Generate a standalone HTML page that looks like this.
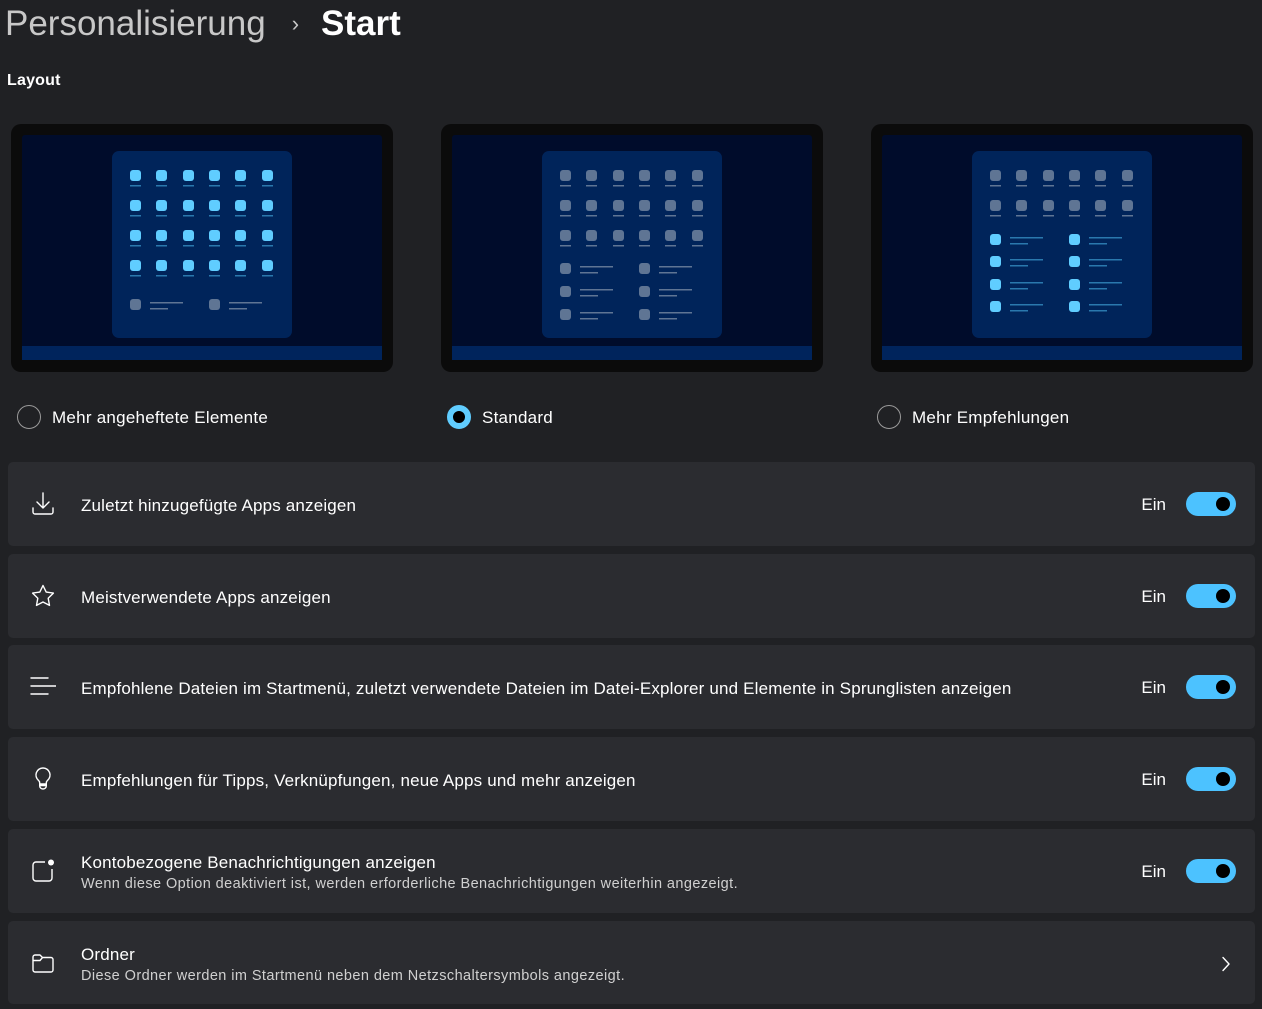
<!DOCTYPE html>
<html><head><meta charset="utf-8"><style>
*{margin:0;padding:0;box-sizing:border-box}
body{width:1262px;height:1009px;background:#202124;color:#fff;font-family:"Segoe UI","Liberation Sans",sans-serif;position:relative;overflow:hidden}
.abs{position:absolute}
.title{left:5px;top:1px;font-size:35px;line-height:46px;white-space:nowrap}
.title .p{color:#c8c8c8}
.title .s{font-weight:600;color:#fff}
.layout{left:7px;top:72px;font-size:16px;font-weight:600;letter-spacing:0.2px}
.prev{position:absolute;top:124px;width:382px;height:248px}
.radio{position:absolute;top:405px;width:24px;height:24px;border-radius:50%;border:1.5px solid #9a9a9a}
.radio.on{border:6px solid #60cdff;background:#000}
.rl{position:absolute;top:408px;font-size:17px;color:#fff;letter-spacing:0.25px}
.card{position:absolute;left:8px;width:1247px;height:84px;background:#2b2c30;border-radius:5px}
.card .ic{position:absolute;left:22px;top:50%;transform:translateY(-50%);width:26px;height:26px}
.card .t{position:absolute;left:73px;font-size:17px;color:#fff;white-space:nowrap;letter-spacing:0.17px}
.card .d{position:absolute;left:73px;font-size:14.5px;color:#d0d0d0;white-space:nowrap;letter-spacing:0.42px}
.card .ein{position:absolute;right:89px;top:50%;transform:translateY(-45%);font-size:17px}
.tog{position:absolute;right:19px;top:50%;margin-top:-12px;width:50px;height:24px;border-radius:12px;background:#4cc2ff}
.tog:after{content:"";position:absolute;right:6px;top:5px;width:14px;height:14px;border-radius:50%;background:#000}
</style></head><body>
<div class="abs title"><span class="p">Personalisierung</span><span style="color:#c8c8c8;font-size:22px;margin:0 22px 0 26px;position:relative;top:-4px">›</span><span class="s">Start</span></div>
<div class="abs layout">Layout</div>

<svg width="0" height="0" style="position:absolute">
<defs>
<g id="tb"><rect width="11" height="11" rx="3" fill="#60cdff"/><rect y="15" width="11" height="1.5" fill="#2a78ad"/></g>
<g id="tg"><rect width="11" height="11" rx="3" fill="#5f7594"/><rect y="15" width="11" height="1.5" fill="#5f7594"/></g>
<g id="rg"><rect width="11" height="11" rx="3" fill="#5f7594"/><rect x="20" y="3" width="33" height="1.5" fill="#5f7594"/><rect x="20" y="9" width="18" height="1.5" fill="#5f7594"/></g>
<g id="rb"><rect width="11" height="11" rx="3" fill="#60cdff"/><rect x="20" y="3" width="33" height="1.5" fill="#2a78ad"/><rect x="20" y="9" width="18" height="1.5" fill="#2a78ad"/></g>
<g id="frame"><rect width="382" height="248" rx="10" fill="#0b0b0b"/><rect x="11" y="11" width="360" height="225" rx="3" fill="#000c2b"/><rect x="11" y="222" width="360" height="14" fill="#00245c"/><rect x="101" y="27" width="180" height="187" rx="7" fill="#00245a"/></g>
<g id="row6b"><use href="#tb" x="119"/><use href="#tb" x="145"/><use href="#tb" x="172"/><use href="#tb" x="198"/><use href="#tb" x="224"/><use href="#tb" x="251"/></g>
<g id="row6g"><use href="#tg" x="119"/><use href="#tg" x="145"/><use href="#tg" x="172"/><use href="#tg" x="198"/><use href="#tg" x="224"/><use href="#tg" x="251"/></g>
</defs></svg>

<svg class="prev" style="left:11px"><use href="#frame"/>
<use href="#row6b" y="46"/><use href="#row6b" y="76"/><use href="#row6b" y="106"/><use href="#row6b" y="136"/>
<use href="#rg" x="119" y="175"/><use href="#rg" x="198" y="175"/></svg>

<svg class="prev" style="left:441px"><use href="#frame"/>
<use href="#row6g" y="46"/><use href="#row6g" y="76"/><use href="#row6g" y="106"/>
<use href="#rg" x="119" y="139"/><use href="#rg" x="198" y="139"/>
<use href="#rg" x="119" y="162"/><use href="#rg" x="198" y="162"/>
<use href="#rg" x="119" y="185"/><use href="#rg" x="198" y="185"/></svg>

<svg class="prev" style="left:871px"><use href="#frame"/>
<use href="#row6g" y="46"/><use href="#row6g" y="76"/>
<use href="#rb" x="119" y="110"/><use href="#rb" x="198" y="110"/>
<use href="#rb" x="119" y="132"/><use href="#rb" x="198" y="132"/>
<use href="#rb" x="119" y="155"/><use href="#rb" x="198" y="155"/>
<use href="#rb" x="119" y="177"/><use href="#rb" x="198" y="177"/></svg>

<div class="radio" style="left:17px"></div><div class="rl" style="left:52px">Mehr angeheftete Elemente</div>
<div class="radio on" style="left:447px"></div><div class="rl" style="left:482px">Standard</div>
<div class="radio" style="left:877px"></div><div class="rl" style="left:912px">Mehr Empfehlungen</div>

<div class="card" style="top:462px">
<svg class="ic" viewBox="0 0 26 26" fill="none" stroke="#fff" stroke-width="1.4" stroke-linecap="round" stroke-linejoin="round"><path d="M13 2v15M7 11l6 6 6-6M3 17v4a2 2 0 0 0 2 2h16a2 2 0 0 0 2-2v-4"/></svg>
<div class="t" style="top:34px">Zuletzt hinzugefügte Apps anzeigen</div><div class="ein">Ein</div><div class="tog"></div></div>

<div class="card" style="top:554px">
<svg class="ic" viewBox="0 0 26 26" fill="none" stroke="#fff" stroke-width="1.4" stroke-linejoin="round"><path d="M13 2.5l3.2 6.6 7.2 1-5.2 5.1 1.3 7.2L13 19l-6.5 3.4 1.3-7.2-5.2-5.1 7.2-1z"/></svg>
<div class="t" style="top:34px">Meistverwendete Apps anzeigen</div><div class="ein">Ein</div><div class="tog"></div></div>

<div class="card" style="top:645px">
<svg class="ic" viewBox="0 0 26 26" fill="none" stroke="#fff" stroke-width="1.4" stroke-linecap="round"><path d="M1 4h17M1 12h25M1 20h17"/></svg>
<div class="t" style="top:34px">Empfohlene Dateien im Startmenü, zuletzt verwendete Dateien im Datei-Explorer und Elemente in Sprunglisten anzeigen</div><div class="ein">Ein</div><div class="tog"></div></div>

<div class="card" style="top:737px">
<svg class="ic" viewBox="0 0 26 26" fill="none" stroke="#fff" stroke-width="1.4" stroke-linecap="round" stroke-linejoin="round"><path d="M13 2a7 7 0 0 0-4.5 12.4c.8.7 1.2 1.6 1.2 2.6v1h6.6v-1c0-1 .4-1.9 1.2-2.6A7 7 0 0 0 13 2zM9.7 18v2a3.3 3 0 0 0 6.6 0v-2M9.7 19.5h6.6"/></svg>
<div class="t" style="top:34px">Empfehlungen für Tipps, Verknüpfungen, neue Apps und mehr anzeigen</div><div class="ein">Ein</div><div class="tog"></div></div>

<div class="card" style="top:829px">
<svg class="ic" viewBox="0 0 26 26" fill="none" stroke="#fff" stroke-width="1.4" stroke-linejoin="round"><path d="M15 4H6a3 3 0 0 0-3 3v13a3 3 0 0 0 3 3h13a3 3 0 0 0 3-3v-9"/><circle cx="21" cy="4.5" r="3" fill="#fff" stroke="none"/></svg>
<div class="t" style="top:24px">Kontobezogene Benachrichtigungen anzeigen</div>
<div class="d" style="top:47px">Wenn diese Option deaktiviert ist, werden erforderliche Benachrichtigungen weiterhin angezeigt.</div>
<div class="ein">Ein</div><div class="tog"></div></div>

<div class="card" style="top:921px;height:83px">
<svg class="ic" viewBox="0 0 26 26" fill="none" stroke="#fff" stroke-width="1.4" stroke-linejoin="round"><path d="M3 7a2 2 0 0 1 2-2h5l2.5 2.5H21a2 2 0 0 1 2 2V20a2 2 0 0 1-2 2H5a2 2 0 0 1-2-2zM3 10.5h7l2.5-3"/></svg>
<div class="t" style="top:24px">Ordner</div>
<div class="d" style="top:47px">Diese Ordner werden im Startmenü neben dem Netzschaltersymbols angezeigt.</div>
<svg style="position:absolute;right:24px;top:35px" width="10" height="16" viewBox="0 0 10 16" fill="none" stroke="#fff" stroke-width="1.4" stroke-linecap="round" stroke-linejoin="round"><path d="M2 1.5l6 6.5-6 6.5"/></svg>
</div>
</body></html>
